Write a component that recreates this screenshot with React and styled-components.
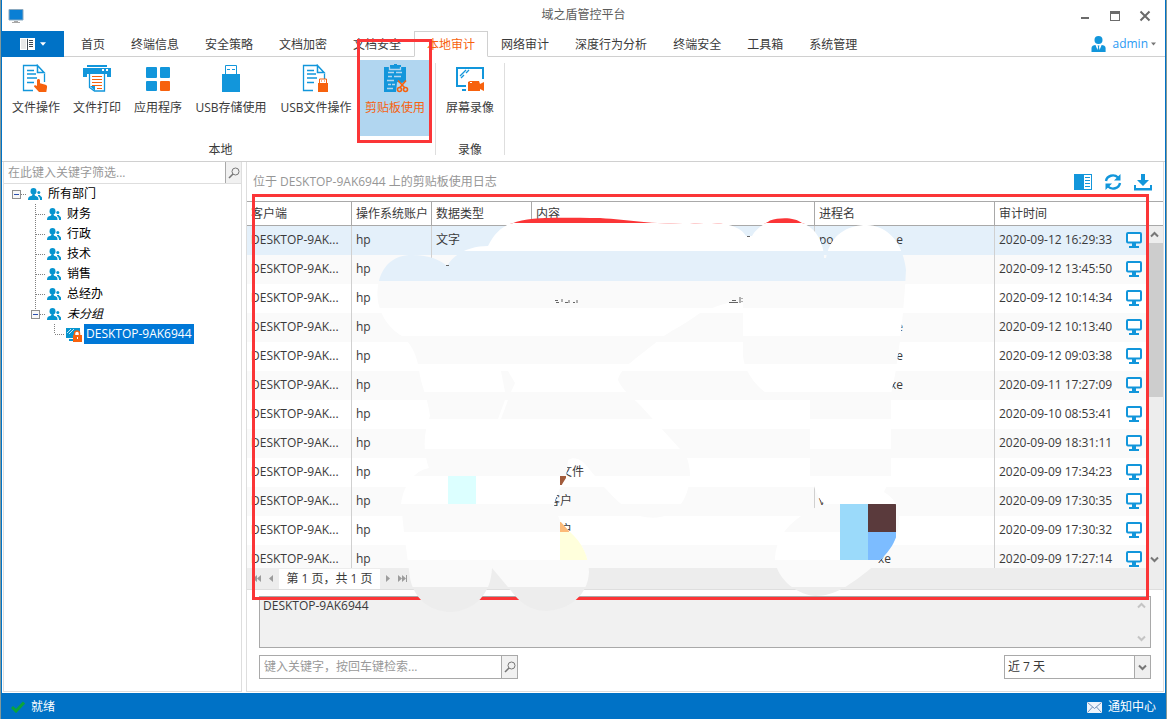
import React from 'react';
import styled, { createGlobalStyle, css } from 'styled-components';

const BLUE = '#1296db';
const ORANGE = '#f7620e';
const ACCENT = '#0072c6';

const GlobalStyle = createGlobalStyle`
  *, *::before, *::after { box-sizing: border-box; }
  body {
    margin: 0;
    background: #84999a;
    color: #3a3a3a;
    font: 12px/16px "Open Sans", "Noto Sans CJK SC", sans-serif;
  }
  button, input, select, textarea { font: inherit; color: inherit; border-radius: 0; }
  button { background: none; border: 0; padding: 0; cursor: pointer; white-space: nowrap; }
  svg { display: block; flex: none; }
`;

const Window = styled.div`
  display: flex;
  flex-direction: column;
  height: 100vh;
  margin: 0 1px 0 1px;
  border: solid ${ACCENT};
  border-width: 0 1px;
  background: #fff;
`;

/* ---------- title bar ---------- */
const TitleBar = styled.header`
  display: grid;
  grid-template-columns: 1fr auto 1fr;
  align-items: center;
  height: 31px;
  flex: none;
  padding: 0 6px;
`;
const Title = styled.h1`
  margin: 0;
  padding-bottom: 2px;
  font-size: 12px;
  font-weight: 400;
  color: #5c5c5c;
`;
const WindowButtons = styled.div`
  display: flex;
  justify-content: flex-end;
  gap: 18px;
  padding-right: 8px;
`;

/* ---------- ribbon ---------- */
const TabRow = styled.nav`
  display: flex;
  height: 26px;
  flex: none;
  box-shadow: inset 0 -1px #d0d0d0;
`;
const MenuButton = styled.button`
  display: flex;
  align-items: center;
  justify-content: center;
  gap: 5px;
  width: 62px;
  margin-right: 4px;
  background: ${ACCENT};
`;
const Tab = styled.button`
  padding: 2px 12px 0;
  border: 1px solid transparent;
  ${(p) =>
    p.$active &&
    css`
      color: ${ORANGE};
      background: #fff;
      border-color: #d0d0d0;
      border-bottom-color: #fff;
    `}
`;
const UserButton = styled.button`
  display: flex;
  align-items: center;
  gap: 3px;
  margin-left: auto;
  padding-right: 9px;
  color: #2b9af3;
`;
const UserName = styled.span`
  padding-left: 3px;
`;
const Ribbon = styled.div`
  position: relative;
  display: flex;
  height: 105px;
  flex: none;
  padding-left: 4px;
  border-bottom: 1px solid #d0d0d0;
`;
const RibbonGroup = styled.section`
  display: flex;
  flex-direction: column;
  align-items: center;
  padding-top: 3px;
`;
const GroupButtons = styled.div`
  display: flex;
  gap: 1px;
  height: 76px;
  padding: 0 4px 0 ${(p) => (p.$inset ? 4 : 0)}px;
`;
const RibbonButton = styled.button`
  display: flex;
  flex-direction: column;
  align-items: center;
  gap: 6px;
  min-width: ${(p) => (p.$wide ? 84 : 60)}px;
  padding: 4px 6px;
  ${(p) =>
    p.$active &&
    css`
      background: #b1d6f0;
      color: ${ORANGE};
    `}
`;
const GroupCaption = styled.div`
  margin-top: 6px;
`;
const Divider = styled.div`
  width: 1px;
  height: 92px;
  margin-top: 6px;
  background: #dedede;
`;
const Highlight = styled.div`
  position: absolute;
  border: 3px solid #fb3537;
  pointer-events: none;
`;
const TabHighlight = styled(Highlight)`
  left: 355px;
  top: -18px;
  width: 75px;
  height: 104px;
`;
const TableHighlight = styled(Highlight)`
  left: 5px;
  right: 14px;
  top: 32px;
  bottom: 91px;
`;

/* ---------- body ---------- */
const Body = styled.main`
  display: flex;
  flex: 1;
  min-height: 0;
  gap: 4px;
  padding: 0 1px 1px;
`;
const SidePanel = styled.aside`
  width: 239px;
  flex: none;
  border: 1px solid #dedede;
  border-top: 0;
`;
const FilterBox = styled.div`
  display: flex;
  height: 22px;
  border-bottom: 1px solid #dedede;
`;
const TextField = styled.input`
  flex: 1;
  min-width: 0;
  border: 0;
  padding: 0 4px;
  outline: 0;
  background: #fff;
  &::placeholder { color: #999; opacity: 1; }
`;
const SearchButton = styled.button`
  display: grid;
  place-items: center;
  width: 16px;
  border-left: 1px solid #a9a9a9;
  background: #f1f1f1;
`;
const Tree = styled.ul`
  list-style: none;
  margin: 0;
  padding: 0 0 0 3px;
  color: #000;
`;
const TreeRow = styled.li`
  display: flex;
  align-items: center;
  height: 20px;
`;
const TreeIcon = styled.span`
  width: 18px;
  margin-left: 2px;
`;
const TreeLabel = styled.span`
  padding: 2px;
  font-style: ${(p) => (p.$italic ? 'italic' : 'normal')};
  ${(p) =>
    p.$selected &&
    css`
      background: #0078d7;
      color: #fff;
    `}
`;

const DataPanel = styled.section`
  position: relative;
  display: flex;
  flex-direction: column;
  flex: 1;
  min-width: 0;
  border: 1px solid #dedede;
  border-top: 0;
`;
const PanelHeader = styled.div`
  display: flex;
  align-items: center;
  justify-content: space-between;
  height: 39px;
  flex: none;
  padding: 0 11px 0 6px;
  color: #969696;
`;
const ToolButtons = styled.div`
  display: flex;
  gap: 12px;
`;
const GridArea = styled.div`
  display: flex;
  flex: 1;
  min-height: 0;
`;
const TableWrap = styled.div`
  flex: 1;
  min-width: 0;
  overflow: hidden;
`;
const Table = styled.table`
  width: 100%;
  table-layout: fixed;
  border-collapse: separate;
  border-spacing: 0;
`;
const Col = styled.col`
  width: ${(p) => (p.$w ? `${p.$w}px` : 'auto')};
`;
const HeadCell = styled.th`
  height: 25px;
  padding: 0 4px;
  border: solid #a9a9a9;
  border-width: 1px 1px 1px 0;
  text-align: left;
  font-weight: 400;
  white-space: nowrap;
  &:last-child { border-right: 0; }
`;
const Row = styled.tr`
  background: ${(p) => (p.$selected ? '#e4f0fa' : p.$alt ? '#fafafa' : '#fff')};
`;
const Cell = styled.td`
  height: 29px;
  padding: 0 4px 2px;
  border-right: 1px solid #d0d0d0;
  white-space: nowrap;
  overflow: hidden;
  &:last-child { border-right: 0; }
`;
const Indented = styled.span`
  padding-left: ${(p) => p.$n * 12}px;
`;
const ProcessName = styled.span`
  display: flex;
  justify-content: space-between;
  width: ${(p) => (p.$short ? 72 : 84)}px;
`;
const TimeCell = styled.div`
  display: flex;
  align-items: center;
  justify-content: space-between;
`;
const ScrollColumn = styled.div`
  display: flex;
  flex-direction: column;
  width: 17px;
  flex: none;
`;
const ScrollHead = styled.div`
  height: 25px;
  flex: none;
  border: solid #a9a9a9;
  border-width: 1px 0;
`;
const ScrollTrack = styled.div`
  display: flex;
  flex-direction: column;
  align-items: center;
  justify-content: space-between;
  flex: 1;
  background: #ededed;
`;
const ScrollThumb = styled.div`
  align-self: stretch;
  flex: 0 0 45%;
  margin-bottom: auto;
  background: #cdcdcd;
`;
const ScrollArrow = styled.button`
  display: grid;
  place-items: center;
  height: 17px;
`;
const Pager = styled.div`
  display: flex;
  align-items: center;
  height: 22px;
  flex: none;
  padding-left: 2px;
  background: #ededed;
  border-bottom: 1px solid #dedede;
`;
const PageButton = styled.button`
  display: grid;
  place-items: center;
  width: 15px;
  height: 20px;
`;
const PageText = styled.span`
  min-width: 101px;
  padding: 2px 5px;
  background: #fff;
  text-align: center;
`;
const Footer = styled.div`
  display: flex;
  flex-direction: column;
  gap: 7px;
  flex: none;
  padding: 6px 12px 12px;
`;
const DetailBox = styled.div`
  display: flex;
  height: 52px;
  border: 1px solid #a9a9a9;
  background: #f1f1f1;
`;
const Detail = styled.textarea`
  flex: 1;
  resize: none;
  border: 0;
  outline: 0;
  padding: 1px 3px;
  background: transparent;
  overflow: hidden;
`;
const DetailScroll = styled.div`
  display: flex;
  flex-direction: column;
  justify-content: space-between;
  align-items: center;
  width: 17px;
  padding: 5px 0;
`;
const FooterRow = styled.div`
  display: flex;
  justify-content: space-between;
`;
const SearchField = styled.div`
  display: flex;
  width: 259px;
  height: 24px;
  border: 1px solid #a9a9a9;
`;
const SelectBox = styled.div`
  display: grid;
  grid-template-columns: 1fr 16px;
  width: 147px;
  height: 24px;
  border: 1px solid #a9a9a9;
  background: linear-gradient(90deg, #fff 0 129px, #a9a9a9 129px 130px, #efefef 130px);
`;
const Select = styled.select`
  grid-area: 1 / 1 / 2 / 3;
  appearance: none;
  border: 0;
  outline: 0;
  padding: 0 3px;
  background: none;
`;
const SelectArrow = styled.span`
  grid-area: 1 / 2 / 2 / 3;
  display: grid;
  place-items: center;
  pointer-events: none;
`;
const Smears = styled.svg`
  position: absolute;
  left: 123px;
  top: 53px;
  pointer-events: none;
`;

const StatusBar = styled.footer`
  display: flex;
  align-items: center;
  justify-content: space-between;
  height: 26px;
  flex: none;
  padding: 2px 9px 0;
  background: ${ACCENT};
  color: #fff;
`;
const StatusItem = styled.span`
  display: flex;
  align-items: center;
  gap: 6px;
`;
const NoticeButton = styled.button`
  display: flex;
  align-items: center;
  gap: 6px;
`;

/* ---------- icons ---------- */
const AppIcon = () => (
  <svg width="16" height="16" viewBox="0 0 16 16">
    <path d="M1 2h14v10H1z" fill="#0a7fd4" />
    <path d="M1 1.500h14v10.500H1z" fill="none" stroke="#8aa9c0" strokeWidth="1" />
    <path d="M6 13h4v1H6zM4 14h8v1H4z" fill="#a8a8a8" />
  </svg>
);
const Minimize = () => (
  <svg width="12" height="12" viewBox="0 0 12 12" fill="#6b6b6b"><path d="M2 7h8v2H2z" /></svg>
);
const Maximize = () => (
  <svg width="12" height="12" viewBox="0 0 12 12" fill="#6b6b6b"><path d="M1 1h10v10H1zM2 4v6h8V4z" fillRule="evenodd" /></svg>
);
const Close = () => (
  <svg width="12" height="12" viewBox="0 0 12 12" stroke="#6b6b6b" strokeWidth="2"><path d="M1.500 1.500l9 9M10.500 1.500l-9 9" /></svg>
);
const Book = () => (
  <svg width="15" height="12" viewBox="0 0 15 12">
    <path d="M0 0h7l.5.5L8 0h7v12H0z" fill="#fff" />
    <path d="M1 1h5v10H1z" fill="#e8e8e8" />
    <path d="M7 1h1v11H7z" fill="#404850" />
    <path d="M9 2h4v1H9zM9 4h4v1H9zM9 6h4v1H9zM9 8h4v1H9z" fill="#404850" />
  </svg>
);
const Caret = ({ fill, w }) => (
  <svg width={w} height="4" viewBox="0 0 7 4" fill={fill}><path d="M0 0h7L3.500 4z" /></svg>
);
const AdminIcon = () => (
  <svg width="15" height="16" viewBox="0 0 15 16" fill={BLUE}>
    <circle cx="7.500" cy="4" r="4" />
    <path d="M.5 16v-4c0-2 2-3 4-3l2 5 .6-3-.6-1.500h2L8 11l.6 3 2-5c2 0 4 1 4 3v4z" />
  </svg>
);
const Search = () => (
  <svg width="12" height="12" viewBox="0 0 12 12" fill="none" stroke="#777">
    <circle cx="7.500" cy="4.500" r="3.500" /><path d="M5 7l-4 4" strokeWidth="1.600" />
  </svg>
);
const Chevron = ({ up, color = '#777' }) => (
  <svg width="9" height="7" viewBox="0 0 9 7" fill="none" stroke={color} strokeWidth="2">
    <path d={up ? 'M1 5.500L4.500 2 8 5.500' : 'M1 1.500L4.500 5 8 1.500'} />
  </svg>
);
const PageSheet = () => (
  <>
    <path d="M17 1H2v26h19V8z" fill="#fff" />
    <path d="M11 26.500H1.500v-25H15M22.500 9.500V18" fill="none" stroke={BLUE} strokeWidth="1.300" />
    <path d="M15.500 1.500v7h6.500z" fill="#fff" stroke={BLUE} strokeWidth="1.500" />
    <path d="M5 6.500h7M5 10h4M9 10h5M5 14h10M5 18.500h7" stroke={BLUE} strokeWidth="1.500" />
  </>
);
const ribbonIcons = {
  file: (
    <>
      <PageSheet />
      <path d="M15 16.500c0-2 3-2 3 0v2.800l5.500 1.400c1.500.4 1.700 1.300 1.500 2.700L24.300 28H17l-5-5.500c0-1.600 2-1.600 3-.4z" fill={ORANGE} />
    </>
  ),
  print: (
    <>
      <path d="M4 1h20v2H4zM0 4h28v9h-4v-3H4v3H0z" fill={BLUE} />
      <path d="M19 5h2v2h-2zM23 5h2v2h-2z" fill="#fff" />
      <path d="M6.500 10v13.500l5 3.500h10V10" fill="#fff" stroke={BLUE} strokeWidth="1.300" />
      <path d="M7 22h5v5z" fill={BLUE} />
      <path d="M9 12.500h10M9 15.500h10M9 18.500h10M9 21.500h10M14 24.500h5" stroke={ORANGE} />
    </>
  ),
  apps: (
    <>
      <rect x="2" y="3" width="11" height="11" rx="1" fill={BLUE} />
      <rect x="16" y="3" width="10" height="11" rx="1" fill={BLUE} />
      <rect x="2" y="17" width="11" height="10" rx="1" fill={BLUE} />
      <rect x="16" y="17" width="10" height="10" rx="1" fill={ORANGE} />
    </>
  ),
  usb: (
    <>
      <path d="M8.500 10V1.500h11V10" fill="none" stroke={BLUE} />
      <path d="M10 5h3v1h-3zM15 5h3v1h-3zM5 10h18v18H5z" fill={BLUE} />
    </>
  ),
  usbFile: (
    <>
      <PageSheet />
      <path d="M17.500 19v-4h7v4" fill="#fff" stroke={ORANGE} />
      <path d="M16 19h10v9H16zM19 16.500h1v1h-1zM22 16.500h1v1h-1z" fill={ORANGE} />
    </>
  ),
  clipboard: (
    <>
      <path d="M3 3h6V1h4V0h3v1h4v2h5v14l-4 2-5-1-1 10H3z" fill={BLUE} />
      <path d="M8.500 3v2.500h11V3M7 8.500h6M15 8.500h6M7 12.500h4M13 12.500h7M6 16.500h7M7 20.500h3M11 20.500h3M6 24.500h6" fill="none" stroke="#b1d6f0" strokeWidth="1.300" />
      <g fill="none" stroke={ORANGE} strokeWidth="1.600">
        <path d="M17 16.500l7 7.500M25 16.500L18.500 24" />
        <circle cx="18.500" cy="25.500" r="2" /><circle cx="24.500" cy="25.500" r="2" />
      </g>
    </>
  ),
  screen: (
    <>
      <path d="M10 22H1V4h26v11" fill="none" stroke={BLUE} strokeWidth="2" />
      <path d="M4 12l6-6M5 14l3-3M10 9l3-3" stroke={BLUE} strokeWidth="1.300" />
      <path d="M6 25h4v2H6z" fill={BLUE} />
      <path d="M12 18l2-1h9l1 3 4-2v9l-4-2v2H12z" fill={ORANGE} />
      <path d="M14 18h2v1h-2z" fill="#fff" />
    </>
  ),
};
const RibbonIcon = ({ name }) => (
  <svg width="28" height="30" viewBox="0 0 28 30">{ribbonIcons[name]}</svg>
);
const People = () => (
  <svg width="14" height="13" viewBox="0 0 14 13" fill="#0795cf">
    <ellipse cx="5.500" cy="3.200" rx="3" ry="3.200" />
    <path d="M4.500 6h2c0 1.500 1 2 2.500 2.500 1 .3 1.500 1.500 1.500 3.500H0c0-2 .5-3 1.500-3.500C3.500 8 4.500 7.500 4.500 6z" />
    <circle cx="10.800" cy="4.500" r="1.500" />
    <path d="M10 7h2c0 1 1.500 1.500 2 2.500V12h-2c0-2-.5-3-2-4z" />
  </svg>
);
const LockedPc = () => (
  <svg width="16" height="15" viewBox="0 0 16 15">
    <path d="M0 1h14v10H0z" fill="#0795cf" />
    <path d="M1 6l4-4M3 7l5-5" stroke="#bfe6f8" />
    <path d="M3 12h5v2H3z" fill="#0795cf" />
    <path d="M8.500 8V6.500a2.500 2.500 0 015 0V8" fill="#fff" stroke={ORANGE} strokeWidth="1.500" />
    <path d="M7 8h9v7H7z" fill={ORANGE} /><path d="M11 10h1v2h-1z" fill="#fff" />
  </svg>
);
const Guide = ({ up, down, right, box }) => (
  <svg width="19" height="20" viewBox="0 0 19 20" fill="none">
    <g stroke="#808080" strokeDasharray="1 1">
      {up && <path d="M9.500 0v10" />}
      {down && <path d="M9.500 10v10" />}
      {right && <path d="M10 10.500h9" />}
    </g>
    {box && (
      <>
        <rect x="5.500" y="6.500" width="8" height="8" fill="#f7f7f7" stroke="#8f8f8f" />
        <path d="M7 10.500h5" stroke="#2c50b0" />
      </>
    )}
  </svg>
);
const PanelIcon = () => (
  <svg width="18" height="18" viewBox="0 0 18 18">
    <path d="M0 1h18v16H0z" fill={BLUE} /><path d="M10 2h7v14h-7z" fill="#fff" />
    <path d="M11 4.500h5M11 7.500h5M11 10.500h5M11 13.500h5" stroke={BLUE} />
  </svg>
);
const RefreshIcon = () => (
  <svg width="18" height="18" viewBox="0 0 18 18">
    <path d="M2 8a7 6.500 0 0112-3.500M16 10a7 6.500 0 01-12 3.500" fill="none" stroke={BLUE} strokeWidth="2.400" />
    <path d="M16.500 1v6.500H10zM1.500 17v-6.500H8z" fill={BLUE} />
  </svg>
);
const DownloadIcon = () => (
  <svg width="18" height="18" viewBox="0 0 18 18" fill={BLUE}>
    <path d="M7 1h4v6h4l-6 6-6-6h4zM0 12h2v3h14v-3h2v5.500H0z" />
  </svg>
);
const MonitorIcon = () => (
  <svg width="16" height="17" viewBox="0 0 16 17">
    <rect x="1" y="2" width="14" height="9.500" rx="1" fill="#fff" stroke={BLUE} strokeWidth="2" />
    <path d="M6 11h4v4h3v2H3v-2h3z" fill={BLUE} />
  </svg>
);
const pagePaths = {
  first: 'M0 0h1v7H0zM5 0v7L1 3.500zM9 0v7L5 3.500z',
  prev: 'M6 0v7L2 3.500z',
  next: 'M3 0v7l4-3.500z',
  last: 'M0 0v7l4-3.500zM4 0v7l4-3.500zM8 0h1v7H8z',
};
const PageIcon = ({ kind }) => (
  <svg width="9" height="7" viewBox="0 0 9 7" fill="#9c9c9c"><path d={pagePaths[kind]} /></svg>
);
const CheckIcon = () => (
  <svg width="14" height="12" viewBox="0 0 14 12" fill="none" stroke="#0ba43a" strokeWidth="3"><path d="M1 6l4 4 8-8.500" /></svg>
);
const MailIcon = () => (
  <svg width="15" height="11" viewBox="0 0 15 11">
    <path d="M0 0h15v11H0z" fill="#eef4fb" />
    <path d="M.5.5l7 6 7-6M.5 10.500L5.500 5M14.500 10.500L9.500 5" fill="none" stroke="#6f90b8" />
  </svg>
);

/* Brush strokes that hide the sensitive cells, filled by coarse colour bands. */
const strokeOutline =
  'M379 281C383 265 394 255 412 255C430 255 440 260 447 266C455 252 472 246 488 246C494 234 502 226 512 223.500C530 216 560 218 600 218C630 220 650 224 690 224C717 221 740 224 746 236L752 236C757 227 765 224 770 220.500C780 217 795 217 802 223C815 227 824 242 824 258L826 258C830 236 846 225 867 225C890 226 903 245 906 270C904 310 900 345 895 375L891 394V476L884 492C894 498 899 506 899 520C899 540 889 554 870 569C850 585 835 596 815 596C793 594 775 575 775 558C776 540 785 527 801 516C812 508 818 507 825 504C817 499 815 487 810 476V392H765C755 385 744 370 743 356V303L728 303C712 307 704 312 700 313C684 325 668 332 660 339C642 355 620 367 618 380C622 390 632 397 640 405L680 449C689 455 690 470 690 476C689 488 686 497 681 504C675 517 655 520 640 516C630 513 618 502 604 487L590 470C582 459 575 456 568 460L566 478C562 484 556 495 554 505L560 521L569 531C583 543 589 558 589 572C588 595 570 610 545 611C528 610 518 600 512 592L492 568C491 594 475 611 450 612C428 611 414 598 410 578L404 532L401 504C404 484 414 471 429 468C423 452 423 434 430 416C428 398 421 386 419 370C417 355 411 343 402 336C385 326 373 305 379 281Z';
const bands = [
  [196, 28, '#fb3537'], [223, 28, '#fff'], [251, 30, '#e4f0fa'], [281, 27, '#fafafa'], [308, 28, '#fff'],
  [336, 28, '#fafafa'], [364, 28, '#fff'], [392, 27, '#fafafa'], [419, 30, '#fff'], [449, 27, '#fafafa'],
  [476, 28, '#fff'], [504, 28, '#fafafa'], [532, 28, '#fff'], [560, 27, '#fafafa'], [587, 28, '#ededed'],
];
const blocks = [
  [448, 476, 28, 28, '#dcffff'], [560, 476, 6, 9, '#a25c3c'], [560, 522, 9, 10, '#fcba78'],
  [560, 532, 28, 28, '#ffffdc'], [840, 504, 28, 56, '#9bdafa'], [868, 504, 28, 28, '#5a3a3c'],
  [868, 532, 28, 28, '#7cbcff'],
];
const BrushSmears = () => (
  <Smears width="540" height="400" viewBox="370 215 540 400" aria-hidden="true">
    <clipPath id="stroke"><path d={strokeOutline} /></clipPath>
    <g clipPath="url(#stroke)">
      {bands.map(([y, h, fill]) => <rect key={y} x="370" y={y} width="540" height={h} fill={fill} />)}
      {blocks.map(([x, y, w, h, fill]) => <rect key={`${x}-${y}`} x={x} y={y} width={w} height={h} fill={fill} />)}
      <path d="M501 371l7 0 7 12-4 9h-6z" fill="#fafafa" />
      <path d="M505 400l3 0-7 19h-3z" fill="#fff" />
    </g>
    <g stroke="#666" fill="none">
      <path d="M555 300.500h3M556 302.500h3M562 299v3M565 302.500h3M569 300v3M573 302.500h2M577 300v3M446 265.500h3" />
      <path d="M729 302.500h9M732 300.500h4M740 297v6M742 298v1M742 301v1M747 236.500h3" />
    </g>
  </Smears>
);

/* ---------- data ---------- */
const tabs = ['首页', '终端信息', '安全策略', '文档加密', '文档安全', '本地审计', '网络审计', '深度行为分析', '终端安全', '工具箱', '系统管理'];
const localTools = [
  ['file', '文件操作'], ['print', '文件打印'], ['apps', '应用程序'],
  ['usb', 'USB存储使用'], ['usbFile', 'USB文件操作'], ['clipboard', '剪贴板使用'],
];
const departments = ['财务', '行政', '技术', '销售', '总经办'];
const rows = [
  { time: '2020-09-12 16:29:33', type: '文字', proc: ['po', 'e'] },
  { time: '2020-09-12 13:45:50' },
  { time: '2020-09-12 10:14:34' },
  { time: '2020-09-12 10:13:40', proc: ['', 'e'] },
  { time: '2020-09-12 09:03:38', proc: ['', 'e'] },
  { time: '2020-09-11 17:27:09', proc: ['', 'xe'] },
  { time: '2020-09-10 08:53:41' },
  { time: '2020-09-09 18:31:11' },
  { time: '2020-09-09 17:34:23', content: '文件', indent: 2 },
  { time: '2020-09-09 17:30:35', content: '客户', indent: 1, proc: ['v', ''] },
  { time: '2020-09-09 17:30:32', content: '户', indent: 2 },
  { time: '2020-09-09 17:27:14', proc: ['', 'xe'], short: true },
];

export default function App() {
  return (
    <Window>
      <GlobalStyle />
      <TitleBar>
        <AppIcon />
        <Title>域之盾管控平台</Title>
        <WindowButtons>
          <button aria-label="最小化"><Minimize /></button>
          <button aria-label="最大化"><Maximize /></button>
          <button aria-label="关闭"><Close /></button>
        </WindowButtons>
      </TitleBar>

      <TabRow>
        <MenuButton aria-label="菜单"><Book /><Caret fill="#fff" w={6} /></MenuButton>
        {tabs.map((t) => <Tab key={t} $active={t === '本地审计'}>{t}</Tab>)}
        <UserButton><AdminIcon /><UserName>admin</UserName><Caret fill="#777" w={5} /></UserButton>
      </TabRow>

      <Ribbon>
        <RibbonGroup>
          <GroupButtons>
            {localTools.map(([icon, label]) => (
              <RibbonButton key={label} $active={icon === 'clipboard'} $wide={label.startsWith('USB')}>
                <RibbonIcon name={icon} />{label}
              </RibbonButton>
            ))}
          </GroupButtons>
          <GroupCaption>本地</GroupCaption>
        </RibbonGroup>
        <Divider />
        <RibbonGroup>
          <GroupButtons $inset>
            <RibbonButton><RibbonIcon name="screen" />屏幕录像</RibbonButton>
          </GroupButtons>
          <GroupCaption>录像</GroupCaption>
        </RibbonGroup>
        <Divider />
        <TabHighlight />
      </Ribbon>

      <Body>
        <SidePanel>
          <FilterBox>
            <TextField aria-label="筛选部门" placeholder="在此键入关键字筛选..." />
            <SearchButton aria-label="筛选"><Search /></SearchButton>
          </FilterBox>
          <Tree>
            <TreeRow>
              <Guide right box />
              <TreeIcon><People /></TreeIcon>
              <TreeLabel>所有部门</TreeLabel>
            </TreeRow>
            {departments.map((d) => (
              <TreeRow key={d}>
                <Guide /><Guide up down right />
                <TreeIcon><People /></TreeIcon>
                <TreeLabel>{d}</TreeLabel>
              </TreeRow>
            ))}
            <TreeRow>
              <Guide /><Guide up right box />
              <TreeIcon><People /></TreeIcon>
              <TreeLabel $italic>未分组</TreeLabel>
            </TreeRow>
            <TreeRow>
              <Guide /><Guide /><Guide up right />
              <TreeIcon><LockedPc /></TreeIcon>
              <TreeLabel $selected>DESKTOP-9AK6944</TreeLabel>
            </TreeRow>
          </Tree>
        </SidePanel>

        <DataPanel>
          <PanelHeader>
            <span>位于 DESKTOP-9AK6944 上的剪贴板使用日志</span>
            <ToolButtons>
              <button aria-label="详情面板"><PanelIcon /></button>
              <button aria-label="刷新"><RefreshIcon /></button>
              <button aria-label="导出"><DownloadIcon /></button>
            </ToolButtons>
          </PanelHeader>
          <GridArea>
            <TableWrap>
              <Table>
                <colgroup>
                  <Col $w={105} /><Col $w={80} /><Col $w={100} /><Col /><Col $w={180} /><Col $w={151} />
                </colgroup>
                <thead>
                  <tr>
                    {['客户端', '操作系统账户', '数据类型', '内容', '进程名', '审计时间'].map((h) => (
                      <HeadCell key={h}>{h}</HeadCell>
                    ))}
                  </tr>
                </thead>
                <tbody>
                  {rows.map((r, i) => (
                    <Row key={r.time} $selected={i === 0} $alt={i % 2 === 1}>
                      <Cell>DESKTOP-9AK...</Cell>
                      <Cell>hp</Cell>
                      <Cell>{r.type}</Cell>
                      <Cell>{r.content && <Indented $n={r.indent}>{r.content}</Indented>}</Cell>
                      <Cell>
                        {r.proc && (
                          <ProcessName $short={r.short}><span>{r.proc[0]}</span><span>{r.proc[1]}</span></ProcessName>
                        )}
                      </Cell>
                      <Cell><TimeCell>{r.time}<MonitorIcon /></TimeCell></Cell>
                    </Row>
                  ))}
                </tbody>
              </Table>
            </TableWrap>
            <ScrollColumn>
              <ScrollHead />
              <ScrollTrack>
                <ScrollArrow aria-label="向上滚动"><Chevron up /></ScrollArrow>
                <ScrollThumb />
                <ScrollArrow aria-label="向下滚动"><Chevron /></ScrollArrow>
              </ScrollTrack>
            </ScrollColumn>
          </GridArea>
          <Pager>
            <PageButton aria-label="第一页"><PageIcon kind="first" /></PageButton>
            <PageButton aria-label="上一页"><PageIcon kind="prev" /></PageButton>
            <PageText>第 1 页，共 1 页</PageText>
            <PageButton aria-label="下一页"><PageIcon kind="next" /></PageButton>
            <PageButton aria-label="最后一页"><PageIcon kind="last" /></PageButton>
          </Pager>
          <Footer>
            <DetailBox>
              <Detail aria-label="详细内容" readOnly value="DESKTOP-9AK6944" />
              <DetailScroll><Chevron up color="#c4c4c4" /><Chevron color="#c4c4c4" /></DetailScroll>
            </DetailBox>
            <FooterRow>
              <SearchField>
                <TextField aria-label="检索日志" placeholder="键入关键字，按回车键检索..." />
                <SearchButton aria-label="检索"><Search /></SearchButton>
              </SearchField>
              <SelectBox>
                <Select aria-label="时间范围" defaultValue="7"><option value="7">近 7 天</option></Select>
                <SelectArrow><Chevron /></SelectArrow>
              </SelectBox>
            </FooterRow>
          </Footer>
          <TableHighlight />
          <BrushSmears />
        </DataPanel>
      </Body>

      <StatusBar>
        <StatusItem><CheckIcon />就绪</StatusItem>
        <NoticeButton><MailIcon />通知中心</NoticeButton>
      </StatusBar>
    </Window>
  );
}
